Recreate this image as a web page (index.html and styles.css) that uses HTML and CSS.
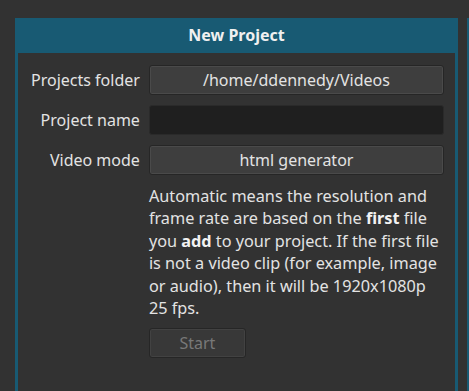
FILE: index.html
```html
<!DOCTYPE html>
<html>
<head>
    <title>New Project</title>
    <meta charset="UTF-8">
    <link rel="stylesheet" href="styles.css">
</head>
<body>
    <div class="dock">
        <div class="panel">
            <div class="panel-title">New Project</div>
            <div class="panel-body">
                <div class="form">
                    <label class="form-label">Projects folder</label>
                    <button class="btn">/home/ddennedy/Videos</button>

                    <label class="form-label">Project name</label>
                    <input type="text" class="field">

                    <label class="form-label">Video mode</label>
                    <button class="btn">html generator</button>

                    <div></div>
                    <div class="help">
                        <p>Automatic means the resolution and frame rate are based on the <b>first</b> file you <b>add</b> to your project. If the first file is not a video clip (for example, image or audio), then it will be 1920x1080p 25 fps.</p>
                        <button class="btn btn-start" disabled>Start</button>
                    </div>
                </div>
            </div>
        </div>
        <div class="panel panel-next"></div>
    </div>
</body>
</html>
```

FILE: styles.css
```css
* {
    margin: 0;
    padding: 0;
    box-sizing: border-box;
}

body {
    font-family: "Noto Sans", "DejaVu Sans", sans-serif;
    font-size: 16px;
    background: #323232;
    color: #e3e3e3;
    height: 100vh;
    overflow: hidden;
}

.dock {
    display: flex;
    gap: 9px;
    height: 100%;
    padding: 18px 0 0 15px;
}

.panel {
    width: 443px;
    flex: none;
    background: #185a73;
    padding: 0 3px;
    display: flex;
    flex-direction: column;
}

.panel-next {
    width: 10px;
}

.panel-title {
    height: 35px;
    line-height: 35px;
    text-align: center;
    font-weight: bold;
    color: #f0f0f0;
}

.panel-body {
    flex: 1;
    background: #323232;
    padding: 12px 11px 0 13px;
}

.form {
    display: grid;
    grid-template-columns: auto 1fr;
    grid-template-rows: 30px 30px 30px auto;
    column-gap: 9px;
    row-gap: 10px;
}

.form-label {
    display: flex;
    align-items: center;
    justify-content: flex-end;
    white-space: nowrap;
}

.btn {
    font-family: inherit;
    font-size: 16px;
    color: #e3e3e3;
    background: #3e3e3e;
    border: 1px solid #262626;
    border-radius: 3px;
    box-shadow: inset 0 0 0 1px #4a4a4a;
}

.field {
    font-family: inherit;
    font-size: 16px;
    background: #1f1f1f;
    border: 1px solid #2a2a2a;
    border-radius: 3px;
    color: #e3e3e3;
    outline: none;
}

.help {
    display: flex;
    flex-direction: column;
    align-items: flex-start;
    gap: 9px;
}

.help p {
    font-size: 16.25px;
    line-height: 22.4px;
    padding-right: 4px;
}

.help b {
    font-weight: bold;
    color: #f2f2f2;
}

.btn-start {
    width: 97px;
    height: 30px;
    color: #787878;
    background: #383838;
    box-shadow: inset 0 0 0 1px #424242;
}
```
